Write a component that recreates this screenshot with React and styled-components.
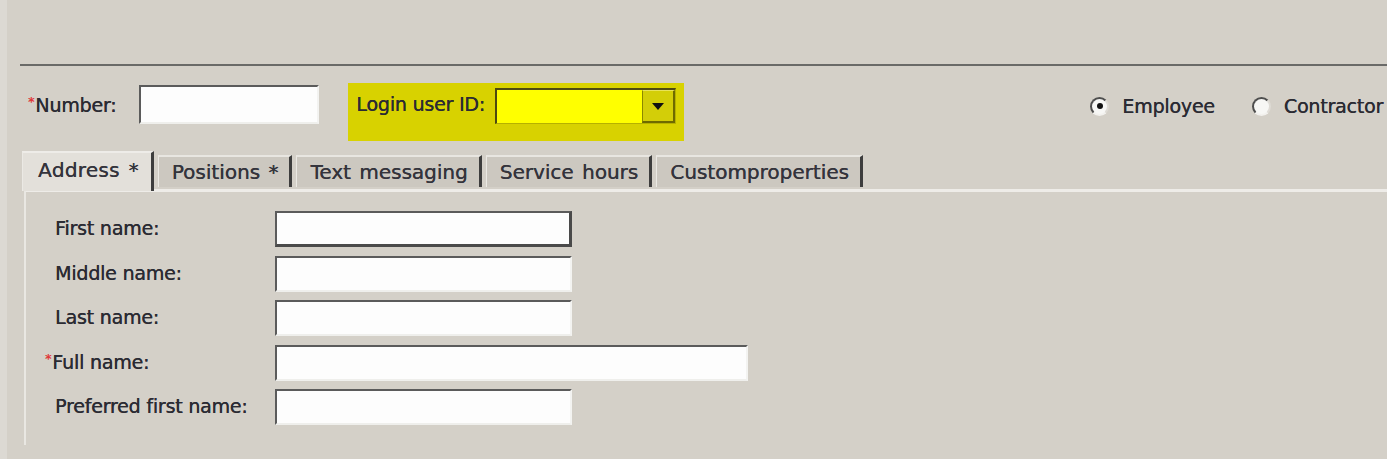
import React from "react"
import styled, { createGlobalStyle } from "styled-components"

const GlobalStyle = createGlobalStyle`
  html, body {
    margin: 0;
    padding: 0;
    background: #d4d0c8;
  }
  body {
    font-family: "DejaVu Sans", Verdana, sans-serif;
    color: #2b2b33;
  }
`

const Page = styled.div`
  min-height: 459px;
  background: #d4d0c8;
  border-left: 7px solid #dcd9d3;
  box-sizing: border-box;
  overflow: hidden;
`

const Divider = styled.div`
  margin: 64px 0 0 13px;
  height: 2px;
  background: #6a6a68;
`

const HeaderRow = styled.div`
  display: flex;
  align-items: flex-start;
  margin-top: 18px;
  height: 58px;
  padding-left: 21px;
`

const Field = styled.div`
  display: flex;
  align-items: center;
  margin-top: 1px;
`

const Label = styled.span`
  font-size: 19px;
  white-space: nowrap;
  letter-spacing: -0.2px;
  text-shadow: 0.3px 0 0 currentColor;
`

const Req = styled.span`
  color: #e0393b;
  font-size: 13px;
  vertical-align: 6px;
  margin-left: ${p => p.$hang || 0}px;
  margin-right: 1px;
`

const TextInput = styled.div`
  box-sizing: border-box;
  width: ${p => p.$w}px;
  height: ${p => p.$h || 36}px;
  margin-left: ${p => p.$ml || 0}px;
  background: #fdfdfd;
  border-top: 2px solid #5b5b5b;
  border-left: 2px solid #5b5b5b;
  border-right: ${p => (p.$focus ? "3px solid #4a4a4a" : "2px solid #f3f3f1")};
  border-bottom: ${p => (p.$focus ? "3px solid #4a4a4a" : "2px solid #efefec")};
`

const LoginBox = styled.div`
  display: flex;
  align-items: center;
  margin-left: 29px;
  margin-top: -1px;
  padding: 5px 8px 17px 8px;
  background: #d8d200;
`

const Combo = styled.div`
  display: flex;
  box-sizing: border-box;
  width: 181px;
  height: 36px;
  margin-left: 10px;
  background: #ffff00;
  border-top: 2px solid #4d4a10;
  border-left: 2px solid #4d4a10;
  border-right: 1px solid #b6b100;
  border-bottom: 1px solid #b6b100;
`

const ComboField = styled.div`
  flex: 1;
`

const ComboButton = styled.div`
  width: 33px;
  display: flex;
  align-items: center;
  justify-content: center;
  background: #d3ce08;
  border-left: 1px solid #8b8700;
  border-top: 1px solid #e8e35a;
  border-right: 2px solid #6e6a00;
  border-bottom: 2px solid #6e6a00;
  box-sizing: border-box;
`

const Arrow = styled.span`
  width: 0;
  height: 0;
  border-left: 6px solid transparent;
  border-right: 6px solid transparent;
  border-top: 7px solid #111;
`

const Radios = styled.div`
  display: flex;
  align-items: center;
  margin-left: auto;
  padding-right: 4px;
  margin-top: 11px;
  gap: 37px;
`

const RadioOption = styled.label`
  display: flex;
  align-items: center;
  gap: 13px;
`

const RadioCircle = styled.span`
  box-sizing: border-box;
  width: 19px;
  height: 19px;
  border-radius: 50%;
  background: #f7f7f5;
  border: 2px solid;
  border-color: #4e4e4e #dedbd5 #f2f1ee #4e4e4e;
  display: flex;
  align-items: center;
  justify-content: center;
  &::after {
    content: "";
    width: 6px;
    height: 6px;
    border-radius: 50%;
    background: ${p => (p.$checked ? "#111" : "transparent")};
  }
`

const TabRow = styled.div`
  display: flex;
  align-items: flex-end;
  gap: 4px;
  height: 40px;
  margin-top: 7px;
  margin-left: 15px;
  position: relative;
  z-index: 1;
`

const Tab = styled.div`
  box-sizing: border-box;
  display: flex;
  align-items: center;
  height: ${p => (p.$active ? 40 : 32)}px;
  margin-bottom: ${p => (p.$active ? -2 : 2)}px;
  padding: ${p => (p.$active ? "0 12px 4px 15px" : "0 11px 0 13px")};
  font-size: 20px;
  letter-spacing: ${p => (p.$active ? "0.3px" : "0")};
  word-spacing: 2px;
  color: #34343c;
  white-space: nowrap;
  text-shadow: 0.3px 0 0 currentColor;
  background: ${p => (p.$active ? "#e3e0da" : "#ccc8c0")};
  border-top: 2px solid ${p => (p.$active ? "#eeece8" : "#e8e6e1")};
  border-left: 1px solid #ebe9e4;
  border-right: 3px solid #3d3d3d;
`

const Panel = styled.div`
  margin-left: 17px;
  border-top: 3px solid #eeece8;
  border-left: 2px solid #e9e7e2;
  padding: 19px 0 20px 29px;
`

const FormGrid = styled.div`
  display: grid;
  grid-template-columns: 220px auto;
  grid-auto-rows: 36px;
  row-gap: 8.5px;
  align-items: center;
  justify-items: start;
`

const FormLabel = styled(Label)`
  margin-top: -2px;
`

const rows = [
  { label: "First name:", w: 297, focus: true },
  { label: "Middle name:", w: 297 },
  { label: "Last name:", w: 297 },
  { label: "Full name:", w: 473, req: true },
  { label: "Preferred first name:", w: 297 },
]

const tabs = ["Address *", "Positions *", "Text messaging", "Service hours", "Customproperties"]

export default function App() {
  return (
    <Page>
      <GlobalStyle />
      <Divider />
      <HeaderRow>
        <Field>
          <Label>
            <Req>*</Req>Number:
          </Label>
          <TextInput $w={180} $h={39} $ml={23} />
        </Field>
        <LoginBox>
          <Label style={{ marginBottom: 4 }}>Login user ID:</Label>
          <Combo>
            <ComboField />
            <ComboButton>
              <Arrow />
            </ComboButton>
          </Combo>
        </LoginBox>
        <Radios>
          <RadioOption>
            <RadioCircle $checked />
            <Label>Employee</Label>
          </RadioOption>
          <RadioOption>
            <RadioCircle />
            <Label>Contractor</Label>
          </RadioOption>
        </Radios>
      </HeaderRow>
      <TabRow>
        {tabs.map((t, i) => (
          <Tab key={t} $active={i === 0}>
            {t}
          </Tab>
        ))}
      </TabRow>
      <Panel>
        <FormGrid>
          {rows.map(r => (
            <React.Fragment key={r.label}>
              <FormLabel>
                {r.req && <Req $hang={-10}>*</Req>}
                {r.label}
              </FormLabel>
              <TextInput $w={r.w} $focus={r.focus} />
            </React.Fragment>
          ))}
        </FormGrid>
      </Panel>
    </Page>
  )
}
